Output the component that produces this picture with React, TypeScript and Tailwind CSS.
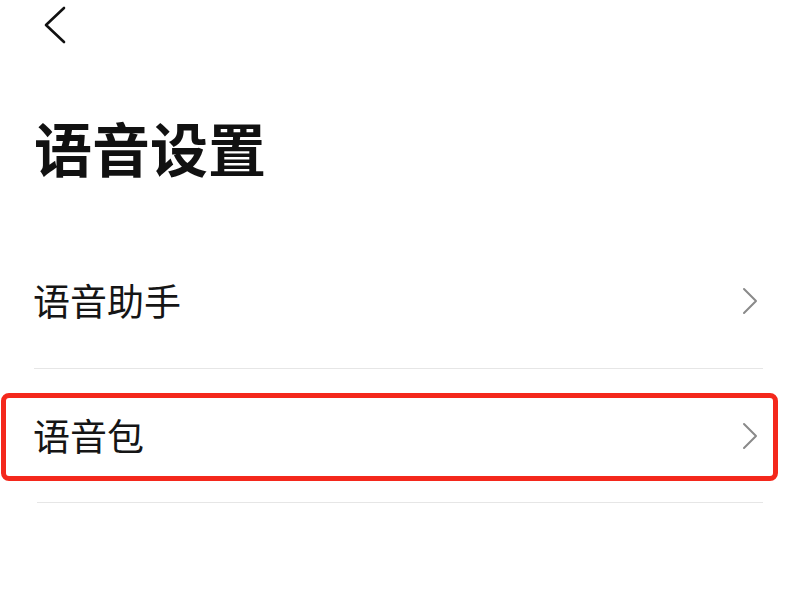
import React from "react";

const Chevron = () => (
  <svg width="16" height="28" viewBox="0 0 16 28" fill="none">
    <path d="M2 2 L14 14 L2 26" stroke="#8a8a8a" strokeWidth="2" strokeLinecap="round" strokeLinejoin="round" />
  </svg>
);

export default function App() {
  return (
    <div
      className="w-[800px] h-[600px] bg-white overflow-hidden flex flex-col"
      style={{ fontFamily: '"Noto Sans CJK SC", "Noto Sans", sans-serif' }}
    >
      <div className="h-[50px] pl-[43px] pt-[6px]">
        <svg width="24" height="38" viewBox="0 0 24 38" fill="none">
          <path d="M21 2 L3 19 L21 36" stroke="#111111" strokeWidth="2.6" strokeLinecap="round" strokeLinejoin="round" />
        </svg>
      </div>
      <div className="h-[184px] pl-[34px] pt-[62px]">
        <h1 className="text-[58px] leading-[70px] font-bold text-[#111111]">语音设置</h1>
      </div>
      <div className="flex flex-col">
        <div className="h-[134px] flex items-center justify-between pl-[33px] pr-[42px]">
          <span className="text-[37px] text-[#151515]">语音助手</span>
          <Chevron />
        </div>
        <div className="h-px bg-[#e6e6e6] ml-[34px] mr-[37px]" />
        <div className="relative h-[133px] flex items-center justify-between pl-[33px] pr-[42px]">
          <span className="text-[37px] text-[#151515]">语音包</span>
          <Chevron />
          <div className="absolute left-[1px] top-[24px] w-[777px] h-[88px] border-[5px] border-[#f4281c] rounded-[8px]" />
        </div>
        <div className="h-px bg-[#e6e6e6] ml-[37px] mr-[37px]" />
      </div>
    </div>
  );
}
